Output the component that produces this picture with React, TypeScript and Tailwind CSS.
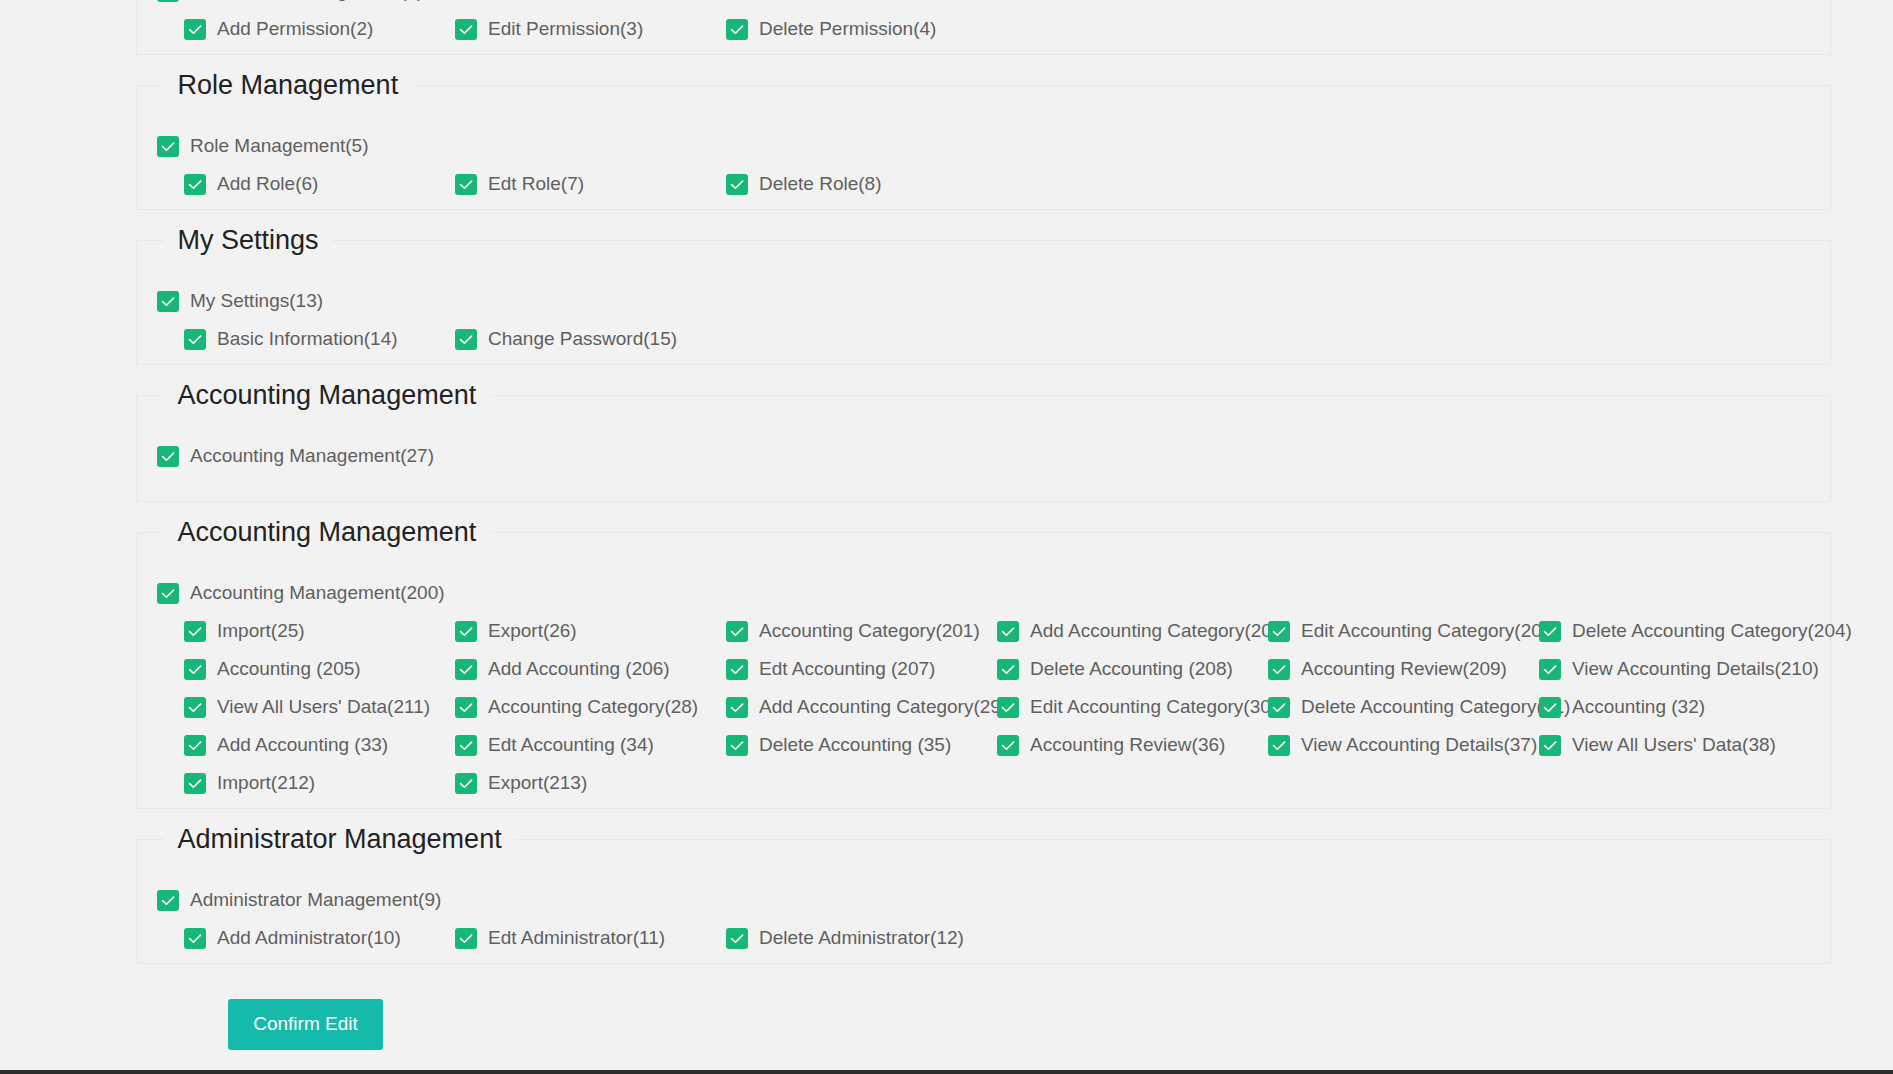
import React from 'react';

type Group = {
  title: string;
  parent: string;
  children: string[];
};

const groups: Group[] = [
  {
    title: 'Permission Management',
    parent: 'Permission Management(1)',
    children: ['Add Permission(2)', 'Edit Permission(3)', 'Delete Permission(4)'],
  },
  {
    title: 'Role Management',
    parent: 'Role Management(5)',
    children: ['Add Role(6)', 'Edt Role(7)', 'Delete Role(8)'],
  },
  {
    title: 'My Settings',
    parent: 'My Settings(13)',
    children: ['Basic Information(14)', 'Change Password(15)'],
  },
  {
    title: 'Accounting Management',
    parent: 'Accounting Management(27)',
    children: [],
  },
  {
    title: 'Accounting Management',
    parent: 'Accounting Management(200)',
    children: [
      'Import(25)',
      'Export(26)',
      'Accounting Category(201)',
      'Add Accounting Category(202)',
      'Edit Accounting Category(203)',
      'Delete Accounting Category(204)',
      'Accounting (205)',
      'Add Accounting (206)',
      'Edt Accounting (207)',
      'Delete Accounting (208)',
      'Accounting Review(209)',
      'View Accounting Details(210)',
      "View All Users' Data(211)",
      'Accounting Category(28)',
      'Add Accounting Category(29)',
      'Edit Accounting Category(30)',
      'Delete Accounting Category(31)',
      'Accounting (32)',
      'Add Accounting (33)',
      'Edt Accounting (34)',
      'Delete Accounting (35)',
      'Accounting Review(36)',
      'View Accounting Details(37)',
      "View All Users' Data(38)",
      'Import(212)',
      'Export(213)',
    ],
  },
  {
    title: 'Administrator Management',
    parent: 'Administrator Management(9)',
    children: ['Add Administrator(10)', 'Edt Administrator(11)', 'Delete Administrator(12)'],
  },
];

function CheckBox() {
  return (
    <span className="flex h-[21px] w-[22px] shrink-0 items-center justify-center rounded-[3px] bg-[#16b777]">
      <svg viewBox="0 0 22 21" className="h-[21px] w-[22px]" fill="none">
        <path d="M5.6 10.6 L9.4 14.3 L16.6 7.1" stroke="#fff" strokeWidth="1.6" strokeLinecap="round" strokeLinejoin="round" />
      </svg>
    </span>
  );
}

function Item({ label }: { label: string }) {
  return (
    <div className="flex min-w-0 items-center">
      <CheckBox />
      <span className="ml-[11px] whitespace-nowrap text-[19px] text-[#5f5f5f]">{label}</span>
    </div>
  );
}

export default function App() {
  return (
    <div className="flex h-screen flex-col overflow-hidden bg-[#f2f2f2] font-['Liberation_Sans',Arial,sans-serif]">
      <div className="-mt-[90px] ml-[136px] mr-[62px]">
        {groups.map((g, i) => (
          <fieldset key={i} className="mb-[10px] min-w-0 border border-[#e8e8e8] px-[20px] pt-[22px] pb-[6px]">
            <legend className="ml-[7px] px-[13.5px] text-[27px] leading-[40px] text-[#222]">{g.title}</legend>
            <div className="flex h-[38px] items-center">
              <Item label={g.parent} />
            </div>
            {g.children.length > 0 ? (
              <div className="grid auto-rows-[38px] grid-cols-6 pl-[27px]">
                {g.children.map((c) => (
                  <Item key={c} label={c} />
                ))}
              </div>
            ) : (
              <div className="h-[20px]" />
            )}
          </fieldset>
        ))}

        <button className="mt-[25px] ml-[92px] h-[51px] w-[155px] rounded-[3px] bg-[#16baaa] text-[19px] text-white">
          Confirm Edit
        </button>
      </div>
      <div className="mt-auto h-[4px] shrink-0 bg-[#2b2b2b]" />
    </div>
  );
}
